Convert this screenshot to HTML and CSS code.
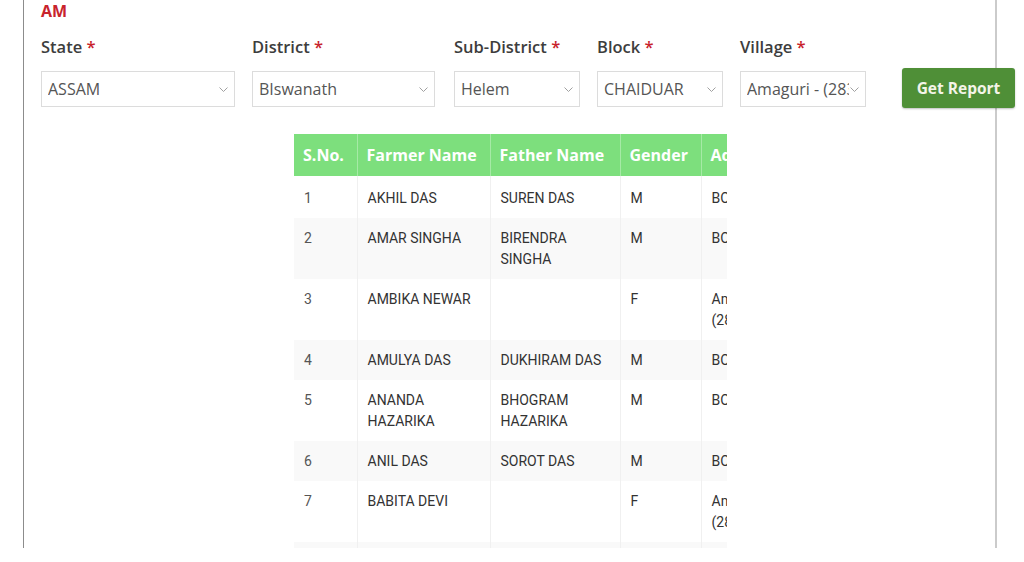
FILE: index.html
```html
<!DOCTYPE html>
<html lang="en">
<head>
    <meta charset="UTF-8">
    <meta name="viewport" content="width=device-width, initial-scale=1.0">
    <title>Farmer Report</title>
    <link rel="stylesheet" href="styles.css">
</head>
<body>
<div class="page">
    <div class="panel">
        <h3 class="title">AM</h3>

        <div class="filters">
            <div class="field f-state">
                <label>State <span class="req">*</span></label>
                <div class="select-wrap">
                    <select><option>ASSAM</option></select>
                    <svg class="chev" width="9" height="5" viewBox="0 0 9 5"><polyline points="0.5,0.5 4.5,4.5 8.5,0.5" fill="none" stroke="#a0a0a0" stroke-width="1"/></svg>
                </div>
            </div>
            <div class="field f-district">
                <label>District <span class="req">*</span></label>
                <div class="select-wrap">
                    <select><option>BIswanath</option></select>
                    <svg class="chev" width="9" height="5" viewBox="0 0 9 5"><polyline points="0.5,0.5 4.5,4.5 8.5,0.5" fill="none" stroke="#a0a0a0" stroke-width="1"/></svg>
                </div>
            </div>
            <div class="field f-small">
                <label>Sub-District <span class="req">*</span></label>
                <div class="select-wrap">
                    <select><option>Helem</option></select>
                    <svg class="chev" width="9" height="5" viewBox="0 0 9 5"><polyline points="0.5,0.5 4.5,4.5 8.5,0.5" fill="none" stroke="#a0a0a0" stroke-width="1"/></svg>
                </div>
            </div>
            <div class="field f-small">
                <label>Block <span class="req">*</span></label>
                <div class="select-wrap">
                    <select><option>CHAIDUAR</option></select>
                    <svg class="chev" width="9" height="5" viewBox="0 0 9 5"><polyline points="0.5,0.5 4.5,4.5 8.5,0.5" fill="none" stroke="#a0a0a0" stroke-width="1"/></svg>
                </div>
            </div>
            <div class="field f-small f-village">
                <label>Village <span class="req">*</span></label>
                <div class="select-wrap">
                    <select><option>Amaguri - (283461)</option></select>
                    <svg class="chev" width="9" height="5" viewBox="0 0 9 5"><polyline points="0.5,0.5 4.5,4.5 8.5,0.5" fill="none" stroke="#a0a0a0" stroke-width="1"/></svg>
                </div>
            </div>
            <button class="btn-report">Get Report</button>
        </div>

        <div class="table-wrap">
            <table class="report">
                <colgroup>
                    <col class="c-sno">
                    <col class="c-farmer">
                    <col class="c-father">
                    <col class="c-gender">
                    <col class="c-address">
                </colgroup>
                <thead>
                    <tr>
                        <th>S.No.</th>
                        <th>Farmer Name</th>
                        <th>Father Name</th>
                        <th>Gender</th>
                        <th>Address</th>
                    </tr>
                </thead>
                <tbody>
                    <tr><td>1</td><td>AKHIL DAS</td><td>SUREN DAS</td><td>M</td><td>BORGAON</td></tr>
                    <tr><td>2</td><td>AMAR SINGHA</td><td>BIRENDRA<br>SINGHA</td><td>M</td><td>BORGAON</td></tr>
                    <tr><td>3</td><td>AMBIKA NEWAR</td><td></td><td>F</td><td>Amaguri -<br>(283461)</td></tr>
                    <tr><td>4</td><td>AMULYA DAS</td><td>DUKHIRAM DAS</td><td>M</td><td>BORGAON</td></tr>
                    <tr><td>5</td><td>ANANDA<br>HAZARIKA</td><td>BHOGRAM<br>HAZARIKA</td><td>M</td><td>BORGAON</td></tr>
                    <tr><td>6</td><td>ANIL DAS</td><td>SOROT DAS</td><td>M</td><td>BORGAON</td></tr>
                    <tr><td>7</td><td>BABITA DEVI</td><td></td><td>F</td><td>Amaguri -<br>(283461)</td></tr>
                    <tr><td>8</td><td>BAPUKAN DAS</td><td>LOHIT DAS</td><td>M</td><td>BORGAON</td></tr>
                </tbody>
            </table>
        </div>
    </div>
</div>
</body>
</html>
```

FILE: styles.css
```css
body {
    margin: 0;
    background: #fff;
    font-family: "Open Sans", Arial, sans-serif;
    color: #333;
}
.page {
    height: 548px;
    overflow: hidden;
}
.panel {
    margin-left: 23px;
    width: 954px;
    height: 548px;
    padding-left: 17px;
    border-left: 1px solid #8c8c8c;
    border-right: 2px solid #cbcbcb;
}
.title {
    margin: 0;
    font-size: 16px;
    line-height: 22px;
    font-weight: 700;
    color: #c8232c;
}
.filters {
    display: flex;
    align-items: flex-end;
    margin-top: 13px;
}
.field {
    flex-shrink: 0;
}
.field label {
    display: block;
    font-size: 16.5px;
    line-height: 24px;
    font-weight: 600;
    color: #3d3d3d;
    margin-bottom: 12px;
    white-space: nowrap;
}
.req {
    color: #c8232c;
}
.f-state { width: 194px; margin-right: 17px; }
.f-district { width: 183px; margin-right: 19px; }
.f-small { width: 126px; margin-right: 17px; }
.f-village { margin-right: 36px; }
.select-wrap {
    position: relative;
}
.select-wrap select {
    appearance: none;
    -webkit-appearance: none;
    display: block;
    width: 100%;
    height: 36px;
    margin: 0;
    padding: 0 16px 0 6px;
    border: 1px solid #dcdcdc;
    border-radius: 0;
    background: #fff;
    font-family: "Open Sans", Arial, sans-serif;
    font-size: 16px;
    color: #555;
}
.chev {
    position: absolute;
    right: 7px;
    top: 16px;
    pointer-events: none;
}
.btn-report {
    position: relative;
    flex-shrink: 0;
    width: 113px;
    height: 40px;
    margin-bottom: -1px;
    padding: 0;
    border: none;
    border-radius: 3px;
    background: #4f8f37;
    box-shadow: 0 1px 2px rgba(0, 0, 0, 0.25);
    color: #f4f4e8;
    font-family: "Open Sans", Arial, sans-serif;
    font-size: 15.5px;
    font-weight: 700;
}
.table-wrap {
    margin-top: 27px;
    margin-left: 253px;
    width: 433px;
    overflow: hidden;
}
.report {
    border-collapse: collapse;
    table-layout: fixed;
    width: 547px;
}
.c-sno { width: 63px; }
.c-farmer { width: 133px; }
.c-father { width: 130px; }
.c-gender { width: 81px; }
.c-address { width: 140px; }
.report th {
    background: #7ddf7d;
    color: #fff;
    font-size: 16px;
    font-weight: 700;
    line-height: 22px;
    padding: 10px 9px;
    text-align: left;
    white-space: nowrap;
    border-left: 1px solid #a6eaa6;
}
.report th:first-child,
.report td:first-child {
    border-left: none;
}
.report td {
    font-family: Roboto, Arial, sans-serif;
    font-size: 14px;
    line-height: 21px;
    color: #333;
    padding: 10px 9px 9px 10px;
    vertical-align: top;
    border-left: 1px solid #f0f0f0;
}
.report tbody tr:first-child td {
    padding-top: 12px;
}
.report tbody tr:nth-child(even) td {
    background: #f9f9f9;
}
.report td:first-child {
    color: #555;
}
```
